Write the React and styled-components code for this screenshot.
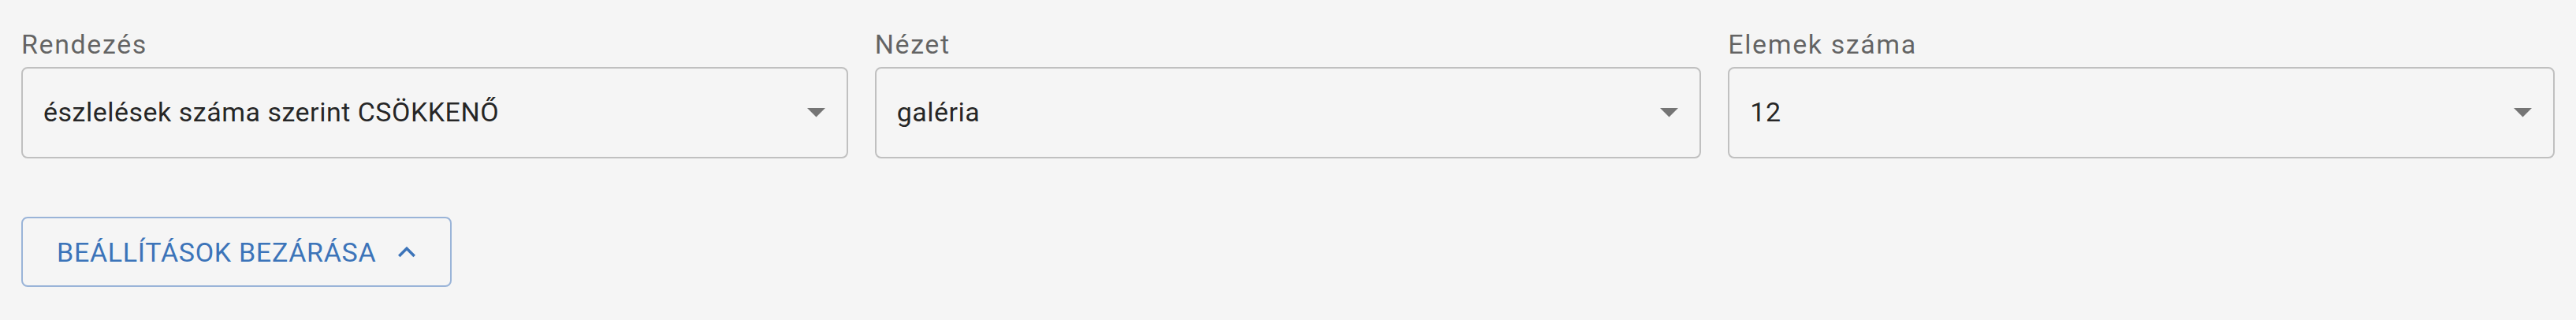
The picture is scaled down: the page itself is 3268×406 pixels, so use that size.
import React from "react"
import styled, { createGlobalStyle } from "styled-components"

const GlobalStyle = createGlobalStyle`
  html, body {
    margin: 0;
    padding: 0;
    background: #f5f5f5;
    font-family: Roboto, "Liberation Sans", sans-serif;
  }
`

const fields = [
  { label: "Rendezés", value: "észlelések száma szerint CSÖKKENŐ" },
  { label: "Nézet", value: "galéria" },
  { label: "Elemek száma", value: "12" },
]

const Caret = () => (
  <CaretIcon viewBox="0 0 23 12" aria-hidden="true">
    <polygon points="0,0 23,0 11.5,11.5" />
  </CaretIcon>
)

const Chevron = () => (
  <ChevronIcon viewBox="0 0 24 24" aria-hidden="true">
    <path d="M12 8l-6 6 1.41 1.41L12 10.83l4.59 4.58L18 14z" />
  </ChevronIcon>
)

const App = () => (
  <>
    <GlobalStyle />
    <Page>
      <FieldRow>
        {fields.map(f => (
          <Field key={f.label}>
            <Label>{f.label}</Label>
            <SelectBox>
              <SelectValue>{f.value}</SelectValue>
              <Caret />
            </SelectBox>
          </Field>
        ))}
      </FieldRow>
      <ToggleButton type="button">
        <ButtonText>Beállítások bezárása</ButtonText>
        <Chevron />
      </ToggleButton>
    </Page>
  </>
)

export default App

const Page = styled.div`
  box-sizing: border-box;
  width: 3268px;
  height: 406px;
  padding: 36px 27px 0;
  background: #f5f5f5;
`

const FieldRow = styled.div`
  display: grid;
  grid-template-columns: repeat(3, 1fr);
  column-gap: 34px;
`

const Field = styled.div`
  display: flex;
  flex-direction: column;
  min-width: 0;
`

const Label = styled.label`
  font-size: 34px;
  line-height: 40px;
  letter-spacing: 1.6px;
  color: rgba(0, 0, 0, 0.6);
  margin-bottom: 9px;
`

const SelectBox = styled.div`
  box-sizing: border-box;
  height: 116px;
  display: flex;
  align-items: center;
  justify-content: space-between;
  padding: 0 27px 3px 26px;
  border: 2px solid #c0c0c0;
  border-radius: 8px;
`

const SelectValue = styled.span`
  font-size: 34px;
  line-height: 36px;
  letter-spacing: 0.5px;
  color: rgba(0, 0, 0, 0.87);
  white-space: nowrap;
`

const CaretIcon = styled.svg`
  width: 23px;
  height: 12px;
  margin-top: 3px;
  fill: #757575;
  flex-shrink: 0;
`

const ToggleButton = styled.button`
  box-sizing: border-box;
  margin-top: 74px;
  width: 546px;
  height: 89px;
  display: flex;
  align-items: center;
  padding: 0 33px 0 43px;
  border: 2px solid #9ab4d8;
  border-radius: 8px;
  background: transparent;
  color: #3c74b9;
  font-family: Roboto, "Liberation Sans", sans-serif;
  cursor: pointer;
`

const ButtonText = styled.span`
  font-size: 34px;
  line-height: 40px;
  letter-spacing: 0.7px;
  text-transform: uppercase;
  white-space: nowrap;
`

const ChevronIcon = styled.svg`
  width: 44px;
  height: 44px;
  margin-left: auto;
  fill: #3c74b9;
  flex-shrink: 0;
`
